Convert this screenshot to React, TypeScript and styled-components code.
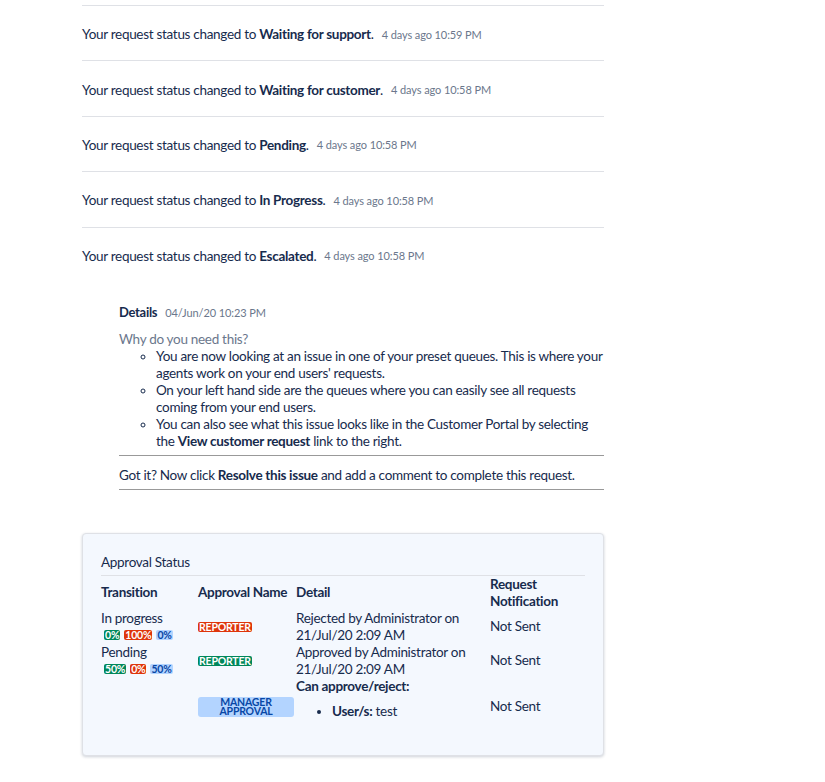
import React from 'react'
import styled, { createGlobalStyle } from 'styled-components'

const GlobalStyle = createGlobalStyle`
  body {
    margin: 0;
    background: #fff;
    font-family: Lato, 'Noto Sans', sans-serif;
    letter-spacing: -0.3px;
    color: #172b4d;
  }
`

const Page = styled.div`
  width: 522px;
  margin-left: 82px;
  padding-top: 5px;
  padding-bottom: 27px;
`

const StatusRow = styled.div`
  display: flex;
  align-items: center;
  border-top: 1px solid #dfe1e6;
  font-size: 13.5px;
  padding-top: 2px;
  box-sizing: border-box;
  height: 55.4px;
  &:last-of-type {
    border-bottom: 1px solid #dfe1e6;
  }
`

const Strong = styled.b`
  font-weight: 700;
  color: #172b4d;
`

const Stamp = styled.span`
  color: #6b778c;
  font-size: 11px;
  letter-spacing: -0.1px;
  margin-left: 8px;
`

const Details = styled.section`
  margin-left: 37px;
  padding-top: 22px;
  font-size: 13.5px;
  line-height: 17px;
`

const DetailsHead = styled.div`
  display: flex;
  align-items: baseline;
  gap: 8px;
  margin-bottom: 10px;
`

const DetailsTitle = styled.span`
  font-size: 13px;
  font-weight: 700;
`

const DetailsDate = styled.span`
  font-size: 11px;
  letter-spacing: -0.1px;
  color: #6b778c;
`

const Question = styled.div`
  color: #6b778c;
`

const Tips = styled.ul`
  list-style: circle;
  margin: 0;
  padding: 0 0 5px 37px;
  border-bottom: 1px solid #999;
`

const Footer = styled.div`
  padding: 11px 0 5px;
  border-bottom: 1px solid #999;
`

const Card = styled.div`
  margin-top: 43px;
  background: #f4f8fe;
  border: 1px solid #dfe1e6;
  border-radius: 4px;
  box-shadow: 0 1px 3px rgba(9, 30, 66, 0.2);
  padding: 19px 18px 19px 18px;
`

const CardTitle = styled.div`
  font-size: 13.5px;
  line-height: 17px;
  padding-top: 1px;
  padding-bottom: 4px;
  border-bottom: 1px solid #dfe1e6;
`

const Table = styled.table`
  width: 100%;
  border-collapse: collapse;
  font-size: 13.5px;
  line-height: 17px;
  th {
    text-align: left;
    font-weight: 700;
    padding: 0;
    vertical-align: middle;
    white-space: nowrap;
  }
  td {
    padding: 0;
    vertical-align: middle;
  }
`

const Col = styled.col<{ $w: number }>`
  width: ${({ $w }) => $w}px;
`

const Pills = styled.div`
  display: flex;
  gap: 4px;
  padding-left: 3px;
  margin: 3px 0 4px;
`

const Lozenge = styled.span<{ $tone: 'green' | 'red' | 'blue' }>`
  display: inline-block;
  font-size: 10.5px;
  font-weight: 700;
  line-height: 10px;
  letter-spacing: -0.2px;
  padding: 0 1px;
  border-radius: 2px;
  text-transform: uppercase;
  background: ${({ $tone }) =>
    $tone === 'green' ? '#00875a' : $tone === 'red' ? '#de350b' : '#b3d4ff'};
  color: ${({ $tone }) => ($tone === 'blue' ? '#0747a6' : '#fff')};
`

const WideLozenge = styled(Lozenge)`
  display: block;
  width: 96px;
  box-sizing: border-box;
  text-align: center;
  line-height: 9px;
  padding: 1px 0;
  border-radius: 3px;
`

const UserList = styled.ul`
  margin: 8px 0 16px;
  padding-left: 36px;
  list-style: disc;
`

const tips: React.ReactNode[] = [
  "You are now looking at an issue in one of your preset queues. This is where your agents work on your end users' requests.",
  'On your left hand side are the queues where you can easily see all requests coming from your end users.',
  <>
    You can also see what this issue looks like in the Customer Portal by selecting the{' '}
    <Strong>View customer request</Strong> link to the right.
  </>,
]

const statuses = [
  ['Waiting for support', '10:59 PM'],
  ['Waiting for customer', '10:58 PM'],
  ['Pending', '10:58 PM'],
  ['In Progress', '10:58 PM'],
  ['Escalated', '10:58 PM'],
]

export default function App() {
  return (
    <>
      <GlobalStyle />
      <Page>
        {statuses.map(([name, time]) => (
          <StatusRow key={name}>
            <span>
              Your request status changed to <Strong>{name}</Strong>.
            </span>
            <Stamp>4 days ago {time}</Stamp>
          </StatusRow>
        ))}

        <Details>
          <DetailsHead>
            <DetailsTitle>Details</DetailsTitle>
            <DetailsDate>04/Jun/20 10:23 PM</DetailsDate>
          </DetailsHead>
          <Question>Why do you need this?</Question>
          <Tips>
            {tips.map((t, i) => (
              <li key={i}>{t}</li>
            ))}
          </Tips>
          <Footer>
            Got it? Now click <Strong>Resolve this issue</Strong> and add a comment to complete this
            request.
          </Footer>
        </Details>

        <Card>
          <CardTitle>Approval Status</CardTitle>
          <Table>
            <colgroup>
              <Col $w={97} />
              <Col $w={98} />
              <Col $w={194} />
              <Col $w={95} />
            </colgroup>
            <thead>
              <tr>
                <th>Transition</th>
                <th>Approval Name</th>
                <th>Detail</th>
                <th>
                  Request
                  <br />
                  Notification
                </th>
              </tr>
            </thead>
            <tbody>
              <tr>
                <td>
                  In progress
                  <Pills>
                    <Lozenge $tone="green">0%</Lozenge>
                    <Lozenge $tone="red">100%</Lozenge>
                    <Lozenge $tone="blue">0%</Lozenge>
                  </Pills>
                </td>
                <td>
                  <Lozenge $tone="red">Reporter</Lozenge>
                </td>
                <td>
                  Rejected by Administrator on
                  <br />
                  21/Jul/20 2:09 AM
                </td>
                <td>Not Sent</td>
              </tr>
              <tr>
                <td>
                  Pending
                  <Pills>
                    <Lozenge $tone="green">50%</Lozenge>
                    <Lozenge $tone="red">0%</Lozenge>
                    <Lozenge $tone="blue">50%</Lozenge>
                  </Pills>
                </td>
                <td>
                  <Lozenge $tone="green">Reporter</Lozenge>
                </td>
                <td>
                  Approved by Administrator on
                  <br />
                  21/Jul/20 2:09 AM
                </td>
                <td>Not Sent</td>
              </tr>
              <tr>
                <td />
                <td>
                  <WideLozenge $tone="blue">
                    Manager
                    <br />
                    Approval
                  </WideLozenge>
                </td>
                <td>
                  <Strong>Can approve/reject:</Strong>
                  <UserList>
                    <li>
                      <Strong>User/s:</Strong> test
                    </li>
                  </UserList>
                </td>
                <td>Not Sent</td>
              </tr>
            </tbody>
          </Table>
        </Card>
      </Page>
    </>
  )
}
